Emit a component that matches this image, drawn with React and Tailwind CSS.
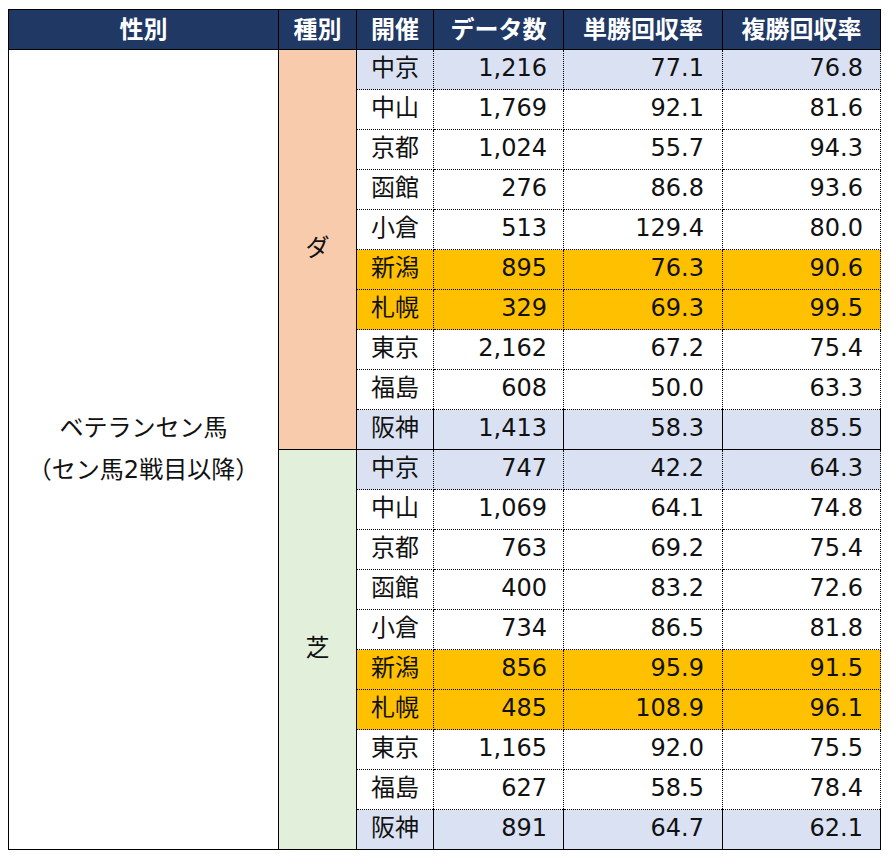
const rows = [
  ["中京", "1,216", "77.1", "76.8", "blue"],
  ["中山", "1,769", "92.1", "81.6", ""],
  ["京都", "1,024", "55.7", "94.3", ""],
  ["函館", "276", "86.8", "93.6", ""],
  ["小倉", "513", "129.4", "80.0", ""],
  ["新潟", "895", "76.3", "90.6", "orange"],
  ["札幌", "329", "69.3", "99.5", "orange"],
  ["東京", "2,162", "67.2", "75.4", ""],
  ["福島", "608", "50.0", "63.3", ""],
  ["阪神", "1,413", "58.3", "85.5", "blue"],
];

const turf = [
  ["中京", "747", "42.2", "64.3", "blue"],
  ["中山", "1,069", "64.1", "74.8", ""],
  ["京都", "763", "69.2", "75.4", ""],
  ["函館", "400", "83.2", "72.6", ""],
  ["小倉", "734", "86.5", "81.8", ""],
  ["新潟", "856", "95.9", "91.5", "orange"],
  ["札幌", "485", "108.9", "96.1", "orange"],
  ["東京", "1,165", "92.0", "75.5", ""],
  ["福島", "627", "58.5", "78.4", ""],
  ["阪神", "891", "64.7", "62.1", "blue"],
];

const bg = { blue: "bg-[#d9e1f2]", orange: "bg-[#ffc000]", "": "bg-white" };

function Section({ label, data, color, first }) {
  return data.map((r, i) => {
    const last = i === data.length - 1;
    const line = last ? "border-b border-b-black border-solid" : "border-b border-b-black border-dotted";
    const cell = `h-[40px] p-0 pb-[3px] border-x border-x-black ${line} ${bg[r[4]]}`;
    return (
      <tr key={label + i}>
        {first && i === 0 && (
          <td
            rowSpan={20}
            className="border border-black bg-white text-center align-middle text-[24px] leading-[41px] text-[#111]"
          >
            <div className="pb-[1px]">ベテランセン馬</div>
            <div>（セン馬2戦目以降）</div>
          </td>
        )}
        {i === 0 && (
          <td
            rowSpan={10}
            className={`border border-black ${color} text-center align-middle text-[24px] text-[#111] pb-[4px]`}
          >
            {label}
          </td>
        )}
        <td className={`${cell} text-center`}>{r[0]}</td>
        <td className={`${cell} text-right pr-[16px]`}>{r[1]}</td>
        <td className={`${cell} text-right pr-[18px]`}>{r[2]}</td>
        <td className={`${cell} text-right pr-[17px]`}>{r[3]}</td>
      </tr>
    );
  });
}

export default function App() {
  const head = "h-[40px] p-0 pb-[4px] border border-black text-white font-bold text-[24px] text-center";
  const jp = { fontFamily: '"Noto Sans CJK JP", sans-serif' };
  return (
    <div className="w-[894px] h-[861px] bg-white pl-[8px] pt-[9px]">
      <table
        className="table-fixed border-collapse w-[872px] text-[24px] leading-none text-[#111]"
        style={{ fontFamily: '"DejaVu Sans", "Noto Sans CJK JP", sans-serif' }}
      >
        <colgroup>
          <col className="w-[270px]" />
          <col className="w-[78px]" />
          <col className="w-[77px]" />
          <col className="w-[130px]" />
          <col className="w-[159px]" />
          <col className="w-[158px]" />
        </colgroup>
        <thead>
          <tr className="bg-[#1f3864]">
            <th className={head} style={jp}>性別</th>
            <th className={head} style={jp}>種別</th>
            <th className={head} style={jp}>開催</th>
            <th className={head} style={jp}>データ数</th>
            <th className={head} style={jp}>単勝回収率</th>
            <th className={head} style={jp}>複勝回収率</th>
          </tr>
        </thead>
        <tbody>
          <Section label="ダ" data={rows} color="bg-[#f8cbad]" first />
          <Section label="芝" data={turf} color="bg-[#e2efda]" />
        </tbody>
      </table>
    </div>
  );
}
